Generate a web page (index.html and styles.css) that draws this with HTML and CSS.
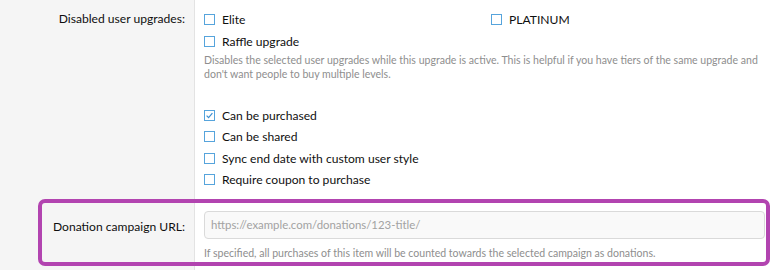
FILE: index.html
```html
<!DOCTYPE html>
<html lang="en">
<head>
<meta charset="utf-8">
<title>Upgrade options</title>
<link rel="stylesheet" href="styles.css">
</head>
<body>
<div class="form">
  <div class="row row-upgrades">
    <div class="label">Disabled user upgrades:</div>
    <div class="field">
      <ul class="checks two-col">
        <li><span class="box"></span>Elite</li>
        <li><span class="box"></span>PLATINUM</li>
        <li><span class="box"></span>Raffle upgrade</li>
      </ul>
      <p class="hint">Disables the selected user upgrades while this upgrade is active. This is helpful if you have tiers of the same upgrade and don't want people to buy multiple levels.</p>
    </div>
  </div>
  <div class="row row-options">
    <div class="label"></div>
    <div class="field">
      <ul class="checks tight">
        <li><span class="box checked"><svg viewBox="0 0 11 11" width="11" height="11"><path d="M2.6 5.6 L4.6 7.6 L8.4 3.2" fill="none" stroke="#3d8fd1" stroke-width="1.2"/></svg></span>Can be purchased</li>
        <li><span class="box"></span>Can be shared</li>
        <li><span class="box"></span>Sync end date with custom user style</li>
        <li><span class="box"></span>Require coupon to purchase</li>
      </ul>
    </div>
  </div>
  <div class="row row-donation">
    <div class="label label-input">Donation campaign URL:</div>
    <div class="field">
      <input class="text-input" type="text" placeholder="https://example.com/donations/123-title/">
      <p class="hint hint-input">If specified, all purchases of this item will be counted towards the selected campaign as donations.</p>
    </div>
    <div class="highlight"></div>
  </div>
</div>
</body>
</html>
```

FILE: styles.css
```css
html, body {
  margin: 0;
  padding: 0;
  background: #ffffff;
}

body {
  font-family: Lato, "Open Sans", sans-serif;
  font-size: 12.1px;
  color: #0f0f0f;
  overflow: hidden;
}

.form {
  width: 771px;
}

.row {
  display: grid;
  grid-template-columns: 195px 1fr;
  position: relative;
}

.label {
  background: #f5f5f5;
  border-right: 1px solid #e3e3e3;
  text-align: right;
  padding: 8px 9px 0 0;
  line-height: 22px;
}

.field {
  padding: 8px 0 0 9px;
}

.checks {
  list-style: none;
  margin: 0;
  padding: 0;
}

.checks li {
  display: flex;
  align-items: center;
  height: 22px;
}

.checks.tight li {
  height: 21.6px;
}

.two-col {
  display: grid;
  grid-template-columns: 287px 1fr;
}

.box {
  box-sizing: border-box;
  width: 11px;
  height: 11px;
  border: 1px solid #56a4dc;
  background: #fff;
  margin-right: 7px;
  flex: none;
  position: relative;
}

.box svg {
  position: absolute;
  left: -1px;
  top: -1px;
}

.hint {
  margin: 2px 0 0;
  font-size: 10.55px;
  line-height: 13.7px;
  color: #8e8e8e;
  padding-right: 8px;
}

.row-upgrades .field {
  padding-bottom: 10px;
}

.row-options .field {
  padding-top: 13px;
  padding-bottom: 8px;
}

.row-donation .field {
  padding-top: 12px;
  padding-bottom: 10px;
  padding-right: 6px;
}

.label-input {
  padding-top: 17px;
}

.text-input {
  box-sizing: border-box;
  display: block;
  width: 100%;
  height: 28px;
  border: 1px solid #dadada;
  border-radius: 4px;
  background: #f9f9f9;
  padding: 0 6px;
  font-family: inherit;
  font-size: 11.4px;
  color: #141414;
  outline: none;
}

.text-input::placeholder {
  color: #a2a2a2;
}

.hint-input {
  margin-top: 8px;
}

.highlight {
  position: absolute;
  left: 38px;
  top: 0;
  width: 732px;
  height: 67px;
  box-sizing: border-box;
  border: 4px solid #b244b0;
  border-radius: 7px;
  pointer-events: none;
}
```
